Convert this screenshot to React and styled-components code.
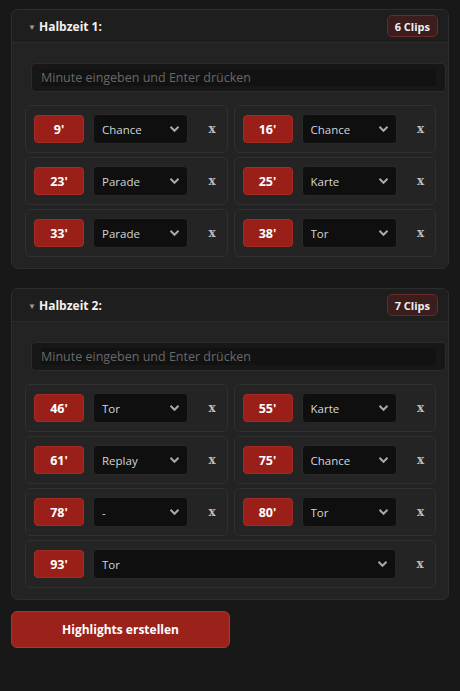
import React from "react";
import styled, { createGlobalStyle } from "styled-components";

const Global = createGlobalStyle`
  html, body { margin: 0; padding: 0; background: #181818; }
  body { font-family: "Open Sans", "Noto Sans", sans-serif; color: #e8e8e8; }
  * { box-sizing: border-box; }
`;

const Page = styled.div`
  width: 460px;
  min-height: 691px;
  padding: 9px 11px;
  display: flex;
  flex-direction: column;
  gap: 19px;
`;

const Panel = styled.section`
  width: 438px;
  border: 1px solid #2e2e2e;
  border-radius: 7px;
  overflow: hidden;
  background: #232323;
`;

const Header = styled.div`
  height: 33px;
  display: flex;
  align-items: center;
  padding: 0 10px 0 16px;
  background: #1e1e1e;
  border-bottom: 1px solid #2b2b2b;
`;

const Caret = styled.span`
  font-size: 8px;
  color: #9a9a9a;
  width: 11px;
  margin-top: 1px;
`;

const Title = styled.h2`
  margin: 0;
  font-size: 12px;
  font-weight: 700;
  color: #f2f2f2;
  flex: 1;
`;

const CountBadge = styled.span`
  height: 22px;
  padding: 0 7px;
  display: inline-flex;
  align-items: center;
  background: #3b1d1d;
  border: 1px solid #6a2a2a;
  border-radius: 5px;
  font-size: 11px;
  font-weight: 700;
  color: #f0f0f0;
`;

const Body = styled.div`
  padding: 20px 12px 11px 13px;
  display: flex;
  flex-direction: column;
  gap: 13px;
`;

const InputShell = styled.div`
  margin-left: 6px;
  width: 415px;
  height: 29px;
  background: #171717;
  border: 1px solid #2c2c2c;
  border-radius: 4px;
  padding: 5px 9px 5px 9px;
  display: flex;
`;

const MinuteInput = styled.input`
  flex: 1;
  height: 17px;
  border: none;
  outline: none;
  background: #121212;
  color: #ddd;
  font-family: inherit;
  font-size: 12.5px;
  padding: 0;
  &::placeholder { color: #686868; }
`;

const Grid = styled.div`
  display: grid;
  grid-template-columns: minmax(0, 1fr) minmax(0, 1fr);
  column-gap: 6px;
  row-gap: 4px;
`;

const Card = styled.div`
  grid-column: ${(p) => (p.$wide ? "1 / -1" : "auto")};
  height: 48px;
  border: 1px solid #303030;
  border-radius: 5px;
  background: #242424;
  display: flex;
  align-items: center;
  padding: 0 5px 0 8px;
`;

const Minute = styled.span`
  width: 50px;
  height: 28px;
  flex: none;
  display: flex;
  align-items: center;
  justify-content: center;
  background: #9a1f19;
  border: 1px solid #a52c25;
  border-radius: 4px;
  font-size: 12.5px;
  font-weight: 700;
  color: #fff;
`;

const SelectWrap = styled.div`
  position: relative;
  margin-left: 9px;
  width: ${(p) => (p.$wide ? "auto" : "95px")};
  flex: ${(p) => (p.$wide ? "1" : "none")};
  height: 30px;
`;

const Select = styled.select`
  appearance: none;
  width: 100%;
  height: 100%;
  background: #0f0f0f;
  border: 1px solid #282828;
  border-radius: 4px;
  color: #d2d6da;
  font-family: inherit;
  font-size: 11.5px;
  padding: 0 20px 0 8px;
  outline: none;
`;

const Chevron = styled.svg`
  position: absolute;
  right: 8px;
  top: 11px;
  width: 11px;
  height: 8px;
  pointer-events: none;
`;

const Remove = styled.button`
  margin-left: 14px;
  width: 20px;
  flex: none;
  background: none;
  border: none;
  padding: 0;
  color: #bdbdbd;
  font-family: "DejaVu Serif", "Liberation Serif", serif;
  font-size: 12px;
  font-weight: 700;
  cursor: pointer;
`;

const CreateButton = styled.button`
  width: 219px;
  height: 37px;
  margin-top: -8px;
  background: #9b211b;
  border: 1px solid #a93630;
  border-radius: 6px;
  color: #fff;
  font-family: inherit;
  font-size: 12px;
  font-weight: 700;
`;

const OPTIONS = ["-", "Tor", "Chance", "Parade", "Karte", "Replay"];

function Clip({ minute, type, wide }) {
  return (
    <Card $wide={wide}>
      <Minute>{minute}'</Minute>
      <SelectWrap $wide={wide}>
        <Select defaultValue={type}>
          {OPTIONS.map((o) => (
            <option key={o} value={o}>{o}</option>
          ))}
        </Select>
        <Chevron viewBox="0 0 11 8">
          <path d="M1.5 1.8 L5.5 5.8 L9.5 1.8" fill="none" stroke="#a8a8a8" strokeWidth="2" />
        </Chevron>
      </SelectWrap>
      <Remove>x</Remove>
    </Card>
  );
}

function Half({ title, clips }) {
  return (
    <Panel>
      <Header>
        <Caret>▼</Caret>
        <Title>{title}</Title>
        <CountBadge>{clips.length} Clips</CountBadge>
      </Header>
      <Body>
        <InputShell>
          <MinuteInput placeholder="Minute eingeben und Enter drücken" />
        </InputShell>
        <Grid>
          {clips.map((c, i) => (
            <Clip
              key={c[0]}
              minute={c[0]}
              type={c[1]}
              wide={clips.length % 2 === 1 && i === clips.length - 1}
            />
          ))}
        </Grid>
      </Body>
    </Panel>
  );
}

export default function App() {
  return (
    <>
      <Global />
      <Page>
        <Half
          title="Halbzeit 1:"
          clips={[[9, "Chance"], [16, "Chance"], [23, "Parade"], [25, "Karte"], [33, "Parade"], [38, "Tor"]]}
        />
        <Half
          title="Halbzeit 2:"
          clips={[[46, "Tor"], [55, "Karte"], [61, "Replay"], [75, "Chance"], [78, "-"], [80, "Tor"], [93, "Tor"]]}
        />
        <CreateButton>Highlights erstellen</CreateButton>
      </Page>
    </>
  );
}
